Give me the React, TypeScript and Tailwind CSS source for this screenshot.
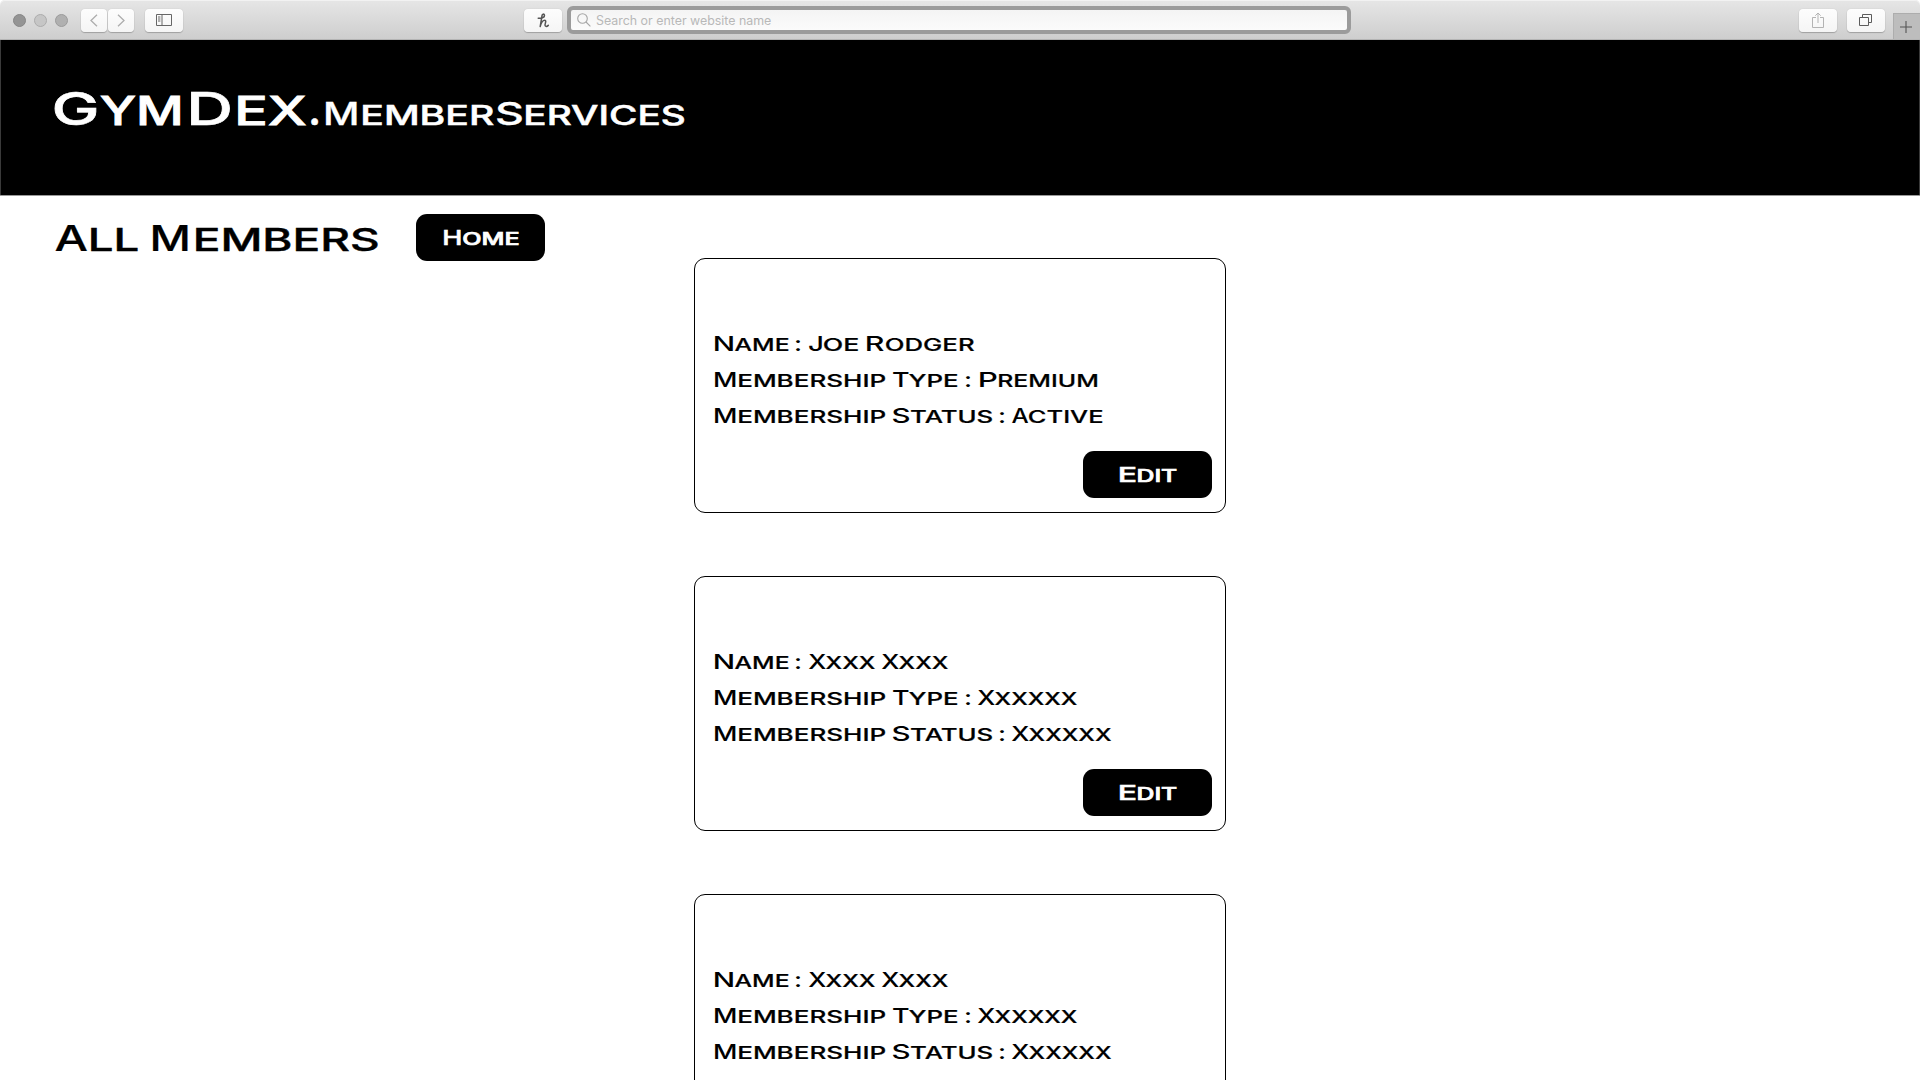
import React, { useLayoutEffect, useRef, useState } from "react";

/* A run of lettering: text, ink start and ink end, in pixels from the start of its line. */
type Run = [string, number, number];

type LineProps = {
  runs: Run[];
  cap: number;
  small: number;
  className?: string;
  stroke?: number;
};

/* Stretches one run of capitals so that its ink fills the given width. */
function Letters({ text, gap, width, size, stroke }: { text: string; gap: number; width: number; size: number; stroke: number }) {
  const ref = useRef<HTMLSpanElement>(null);
  const [fit, setFit] = useState({ shift: 0, scale: 1 });

  useLayoutEffect(() => {
    const ctx = document.createElement("canvas").getContext("2d");
    if (!ctx || !ref.current) return;
    ctx.font = `${getComputedStyle(ref.current).fontWeight} ${size * 10}px Inter`;
    const m = ctx.measureText(text.toUpperCase());
    const left = -m.actualBoundingBoxLeft / 10 - stroke / 2;
    const right = m.actualBoundingBoxRight / 10 + stroke / 2;
    const scale = width / (right - left);
    setFit({ shift: -left * scale, scale });
  }, [text, width, size, stroke]);

  return (
    <span className="inline-block text-left whitespace-nowrap" style={{ width, marginLeft: gap }}>
      <span
        ref={ref}
        className="inline-block origin-left font-medium uppercase"
        style={{
          fontSize: size,
          WebkitTextStroke: `${stroke}px currentColor`,
          transform: `translateX(${fit.shift}px) scaleX(${fit.scale})`,
        }}
      >
        {text}
      </span>
    </span>
  );
}

function Line({ runs, cap, small, className = "", stroke = 0 }: LineProps) {
  return (
    <div className={`flex items-baseline font-['Inter',sans-serif] ${className}`}>
      {runs.map(([text, start, end], i) => {
        const isSmall = /^[a-z]/.test(text);
        return (
          <Letters
            key={i}
            text={text}
            gap={start - (i === 0 ? 0 : runs[i - 1][2])}
            width={end - start}
            size={isSmall ? small : cap}
            stroke={isSmall ? stroke + 0.2 : stroke}
          />
        );
      })}
    </div>
  );
}

const NAME: Run[] = [["N", 0, 17.8], ["ame", 20.3, 73.6], [":", 82, 86]];
const TYPE: Run[] = [["M", 0, 20.3], ["embership", 25, 171.3], ["T", 178.5, 193.9], ["ype", 195, 243.3], [":", 251.6, 255.6]];
const STATUS: Run[] = [["M", 0, 20.3], ["embership", 25, 171.3], ["S", 178.5, 194.6], ["tatus", 196.4, 277.6], [":", 285.2, 289.2]];

const JOE: Run[][] = [
  [...NAME, ["J", 94.4, 107], ["oe", 109.6, 143.5], ["R", 153, 169.6], ["odger", 171.6, 259.8]],
  [...TYPE, ["P", 265.3, 281.6], ["remium", 284.2, 382.4]],
  [...STATUS, ["A", 297.6, 313.8], ["ctive", 314.8, 388]],
];

const BLANK: Run[][] = [
  [...NAME, ["X", 94.2, 111], ["xxx", 111.2, 160.2], ["X", 167.8, 184.6], ["xxx", 184.8, 233.8]],
  [...TYPE, ["X", 263.6, 280.4], ["xxxxx", 280.6, 362.6]],
  [...STATUS, ["X", 297.4, 314.2], ["xxxxx", 314.4, 396.6]],
];

function MemberCard({ lines, editable = true }: { lines: Run[][]; editable?: boolean }) {
  return (
    <article className="flex h-[255px] w-[532px] shrink-0 flex-col rounded-[11px] border border-black pt-[67px] pl-[19.5px] pr-[13px]">
      {lines.map((runs, i) => (
        <Line key={i} runs={runs} cap={19.8} small={17.3} className="h-9 leading-[36px]" />
      ))}
      {editable && (
        <button className="mt-[17px] flex h-[47px] w-[129px] shrink-0 self-end rounded-[11px] bg-black pl-[37px] text-white">
          <Line runs={[["E", 0, 15.7], ["dit", 18.2, 57]]} cap={20.2} small={17.6} stroke={0.5} className="leading-[48px]" />
        </button>
      )}
    </article>
  );
}

function ToolButton({ children, className = "" }: { children: React.ReactNode; className?: string }) {
  return (
    <button
      className={`flex h-[23px] items-center justify-center rounded-[4px] bg-linear-to-b from-[#fdfdfd] to-[#f5f5f5] shadow-[0_1px_1px_rgba(0,0,0,0.22),0_0_1px_rgba(0,0,0,0.2)] ${className}`}
    >
      {children}
    </button>
  );
}

function Toolbar() {
  return (
    <header className="flex h-10 shrink-0 items-start rounded-t-[5px] border-b border-[#b4b4b4] bg-linear-to-b from-[#e6e6e6] to-[#cecece] shadow-[inset_0_1px_0_#f2f2f2]">
      <div className="mt-[14px] ml-[13px] flex gap-2">
        <span className="h-[13px] w-[13px] rounded-full border border-[#868686] bg-[#949494]" />
        <span className="h-[13px] w-[13px] rounded-full border border-[#acacac] bg-[#c6c6c6]" />
        <span className="h-[13px] w-[13px] rounded-full border border-[#9b9b9b] bg-[#b0b0b0]" />
      </div>
      <div className="mt-[8.5px] ml-[13px] flex gap-px">
        <ToolButton className="w-[26px]">
          <svg width="8" height="13" viewBox="0 0 8 13" fill="none" stroke="#adadad" strokeWidth="1.3">
            <path d="M7 .7 1 6.5l6 5.8" />
          </svg>
        </ToolButton>
        <ToolButton className="w-[26px]">
          <svg width="8" height="13" viewBox="0 0 8 13" fill="none" stroke="#adadad" strokeWidth="1.3">
            <path d="m1 .7 6 5.8-6 5.8" />
          </svg>
        </ToolButton>
      </div>
      <ToolButton className="mt-[8.5px] ml-[11px] w-[38px]">
        <svg width="16" height="12" viewBox="0 0 16 12" fill="none" stroke="#666" strokeWidth="1">
          <path d="M.5.5h15v11H.5zM6 .5v11M2 3h2.4M2 5h2.4M2 7h2.4" />
        </svg>
      </ToolButton>
      <ToolButton className="mt-[8.5px] ml-[341px] w-[38px]">
        <svg width="13" height="15" viewBox="0 0 13 15" fill="none" stroke="#555" strokeWidth="1.5" strokeLinecap="round" strokeLinejoin="round">
          <path d="M1.2 5.2C4 5.6 7.9 4.5 7.5 2.3 7.2 .6 5.3 .8 5 2.6L3.2 13.6C4.2 9.4 6 7.3 7.8 7.3c2 0 .1 3.5 .2 4.9 .2 1.6 2 1.5 3.3 .2" />
        </svg>
      </ToolButton>
      <div className="mt-[6px] ml-[5px] flex h-[28px] w-[784px] items-center rounded-[6px] border-4 border-[#9b9b9b] bg-linear-to-b from-[#f4f4f4] to-[#fbfbfb] pl-[6px]">
        <svg width="14" height="14" viewBox="0 0 14 14" fill="none" stroke="#a5a5a5" strokeWidth="1.1">
          <circle cx="5.5" cy="5.5" r="4.8" />
          <path d="m9 9 4.4 4.4" />
        </svg>
        <span className="mt-px ml-[5px] font-['Inter',sans-serif] text-[12.4px] leading-5 text-[#b8b8b8]">
          Search or enter website name
        </span>
      </div>
      <ToolButton className="mt-[8.5px] ml-auto w-[38px]">
        <svg width="12" height="16" viewBox="0 0 12 16" fill="none" stroke="#b3b3b3" strokeWidth="1">
          <path d="M4 5.5H.5v10h11v-10H8M6 11V1M3.3 3.7 6 1l2.7 2.7" />
        </svg>
      </ToolButton>
      <ToolButton className="mt-[8.5px] ml-[9.5px] w-[38px]">
        <svg width="14" height="14" viewBox="0 0 14 14" fill="none" stroke="#5c5c5c" strokeWidth="1">
          <path d="M.5 4.5h9v8h-9zM3.5 4.2V1.500h9v8h-2.800" />
        </svg>
      </ToolButton>
      <button className="mt-[13px] ml-[8.5px] flex h-[26px] w-[27px] items-center justify-center border-t border-l border-[#adadad] bg-[#bdbdbd] pr-[2px]">
        <svg width="12" height="12" viewBox="0 0 12 12" stroke="#555" strokeWidth="1.1">
          <path d="M6 0v12M0 6h12" />
        </svg>
      </button>
    </header>
  );
}

export default function App() {
  return (
    <div className="flex h-[1080px] w-[1920px] flex-col overflow-hidden bg-white text-black">
      <Toolbar />
      <section className="flex h-[155px] shrink-0 items-baseline border-x border-[#3a3a3a] bg-black pt-[43px] pl-[53px] text-white">
        <Line
          runs={[["G", 0, 43], ["ym", 46, 126.7], ["D", 137, 176.3], ["ex", 184, 252.7], [".", 257.3, 264.7]]}
          cap={45.5}
          small={39}
          stroke={0.6}
          className="leading-[51px]"
        />
        <Line
          runs={[["M", 7.3, 38.3], ["ember", 44.3, 175], ["S", 178, 203.6], ["ervices", 207.6, 366.3]]}
          cap={31.2}
          small={26.5}
          stroke={0.3}
          className="leading-[51px]"
        />
      </section>
      <main className="flex grow flex-col border-t border-[#999]">
        <div className="flex h-[62px] shrink-0 pt-[18px] pl-[55px]">
          <Line
            runs={[["A", 0, 32], ["ll", 36, 83], ["M", 98.3, 133.3], ["embers", 141, 323.3]]}
            cap={36}
            small={31.3}
            stroke={0.2}
            className="w-[361px] leading-[48px]"
          />
          <button className="flex h-[47px] w-[129px] shrink-0 rounded-[11px] bg-black pl-[27.5px] text-white">
            <Line runs={[["H", 0, 16.6], ["ome", 19.6, 75.3]]} cap={20.2} small={17.6} stroke={0.5} className="leading-[48px]" />
          </button>
        </div>
        <div className="flex flex-col items-center gap-[63px]">
          <MemberCard lines={JOE} />
          <MemberCard lines={BLANK} />
          <MemberCard lines={BLANK} editable={false} />
        </div>
      </main>
    </div>
  );
}
